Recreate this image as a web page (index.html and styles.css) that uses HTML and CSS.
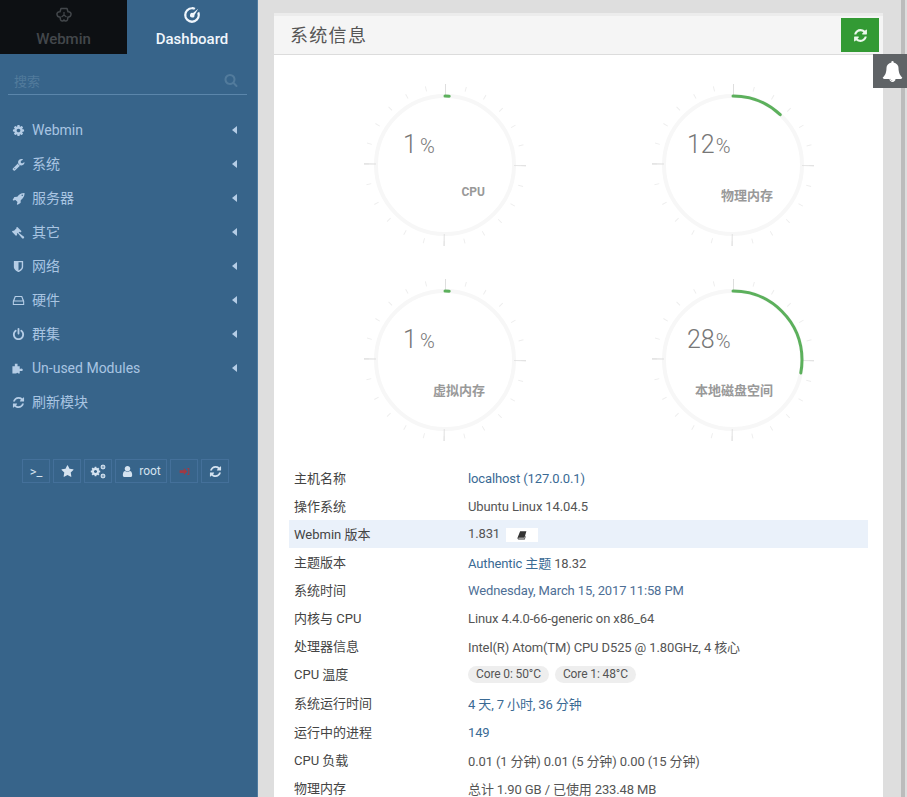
FILE: index.html
```html
<!DOCTYPE html>
<html lang="zh-CN">
<head>
  <meta charset="UTF-8" />
  <meta name="viewport" content="width=device-width, initial-scale=1.0"/>
  <title>Webmin Dashboard</title>
  <link rel="stylesheet" href="styles.css">
</head>
<body>
  <svg class="sprites" aria-hidden="true">
    <symbol id="i-refresh" viewBox="0 0 1792 1792"><path d="M1639 1056q0 5-1 7-64 268-268 434.5t-478 166.5q-146 0-282.5-55t-243.5-157l-129 129q-19 19-45 19t-45-19-19-45v-448q0-26 19-45t45-19h448q26 0 45 19t19 45-19 45l-137 137q71 66 161 102t187 36q134 0 250-65t186-179q11-17 53-117 8-23 30-23h192q13 0 22.5 9.5t9.5 22.5zm25-800v448q0 26-19 45t-45 19h-448q-26 0-45-19t-19-45 19-45l138-138q-148-137-349-137-134 0-250 65t-186 179q-11 17-53 117-8 23-30 23h-199q-13 0-22.5-9.5t-9.5-22.5v-7q65-268 270-434.5t480-166.5q146 0 284 55.5t245 156.5l130-129q19-19 45-19t45 19 19 45z"/></symbol>
    <symbol id="i-bell" viewBox="0 0 1792 1792"><path d="M912 1696q0-16-16-16-59 0-101.5-42.5t-42.5-101.5q0-16-16-16t-16 16q0 73 51.5 124.5t124.5 51.5q16 0 16-16zm816-288q0 52-38 90t-90 38h-448q0 106-75 181t-181 75-181-75-75-181h-448q-52 0-90-38t-38-90q50-42 91-88t85-119.5 74.5-158.5 50-206 19.5-260q0-152 117-282.5t307-158.5q-8-19-8-39 0-40 28-68t68-28 68 28 28 68q0 20-8 39 190 28 307 158.5t117 282.5q0 139 19.5 260t50 206 74.5 158.5 85 119.5 91 88z"/></symbol>
    <symbol id="i-star" viewBox="0 0 1792 1792"><path d="M1728 647q0 22-26 48l-363 354 86 500q1 7 1 20 0 21-10.5 35.5t-30.5 14.5q-19 0-40-12l-449-236-449 236q-22 12-40 12-21 0-31.5-14.5t-10.5-35.5q0-6 2-20l86-500-364-354q-25-27-25-48 0-37 56-46l502-73 225-455q19-41 49-41t49 41l225 455 502 73q56 9 56 46z"/></symbol>
    <symbol id="i-cog" viewBox="0 0 1792 1792"><path d="M1152 896q0-106-75-181t-181-75-181 75-75 181 75 181 181 75 181-75 75-181zm512-109v222q0 12-8 23t-20 13l-185 28q-19 54-39 91 35 50 107 138 10 12 10 25t-9 23q-27 37-99 108t-94 71q-12 0-26-9l-138-108q-44 23-91 38-16 136-29 186-7 28-36 28h-222q-14 0-24.5-8.5t-11.5-21.5l-28-184q-49-16-90-37l-141 107q-10 9-25 9-14 0-25-11-126-114-165-168-7-10-7-23 0-12 8-23 15-21 51-66.5t54-70.5q-27-50-41-99l-183-27q-13-2-21-12.5t-8-23.5v-222q0-12 8-23t19-13l186-28q14-46 39-92-40-57-107-138-10-12-10-24 0-10 9-23 26-36 98.5-107.5t94.5-71.5q13 0 26 10l138 107q44-23 91-38 16-136 29-186 7-28 36-28h222q14 0 24.5 8.5t11.5 21.5l28 184q49 16 90 37l142-107q9-9 24-9 13 0 25 10 129 119 165 170 7 8 7 22 0 12-8 23-15 21-51 66.5t-54 70.5q26 50 41 98l183 28q13 2 21 12.5t8 23.5z"/></symbol>
    <symbol id="i-wrench" viewBox="0 0 1792 1792"><path d="M448 1472q0-26-19-45t-45-19-45 19-19 45 19 45 45 19 45-19 19-45zm644-420l-682 682q-37 37-90 37-52 0-91-37l-106-108q-38-36-38-90 0-53 38-91l681-681q39 98 114.5 173.5t173.5 114.5zm634-435q0 39-23 106-47 134-164.5 217.5t-258.5 83.5q-185 0-316.5-131.5t-131.5-316.5 131.5-316.5 316.5-131.5q58 0 121.5 16.5t107.5 46.5q16 11 16 28t-16 28l-293 169v224l193 107q5-3 79-48.5t135.5-81 70.5-35.5q15 0 23.5 10t8.5 25z"/></symbol>
    <symbol id="i-rocket" viewBox="0 0 1792 1792"><path d="M1504 448q0-40-28-68t-68-28-68 28-28 68 28 68 68 28 68-28 28-68zm224-288q0 249-75.5 430.5t-253.5 360.5q-81 80-195 176l-20 379q-2 16-16 26l-384 224q-7 4-16 4-12 0-23-9l-64-64q-13-14-8-32l85-276-281-281-276 85q-3 1-9 1-14 0-23-9l-64-64q-17-19-5-39l224-384q10-14 26-16l379-20q96-114 176-195 188-187 358-258t431-71q14 0 24 9.5t10 22.5z"/></symbol>
    <symbol id="i-gavel" viewBox="0 0 16 16"><path d="M6.600 1.200 11.800 6.400 10.200 8 9.400 7.200 8.200 8.400 14.800 13.200 15 14.400 13.600 15.600 12.400 15 7 8.600 5.800 9.800 6.600 10.600 5 12.200-.2 7 1.400 5.400 2.200 6.200 5.800 2.600 5 1.800z"/></symbol>
    <symbol id="i-shield" viewBox="0 0 1792 1792"><path d="M1344 960v-640h-448v1137q119-63 213-137 235-184 235-360zm192-768v768q0 86-33.5 170.5t-83 150-118 127.5-126.5 103-121 77.5-89.5 49.5-42.5 20q-12 6-26 6t-26-6q-16-7-42.5-20t-89.5-49.5-121-77.5-126.5-103-118-127.5-83-150-33.5-170.5v-768q0-26 19-45t45-19h1152q26 0 45 19t19 45z"/></symbol>
    <symbol id="i-hdd" viewBox="0 0 16 16"><path d="M3.500 2.500h9L15 8.500v5H1v-5zM4.500 3.800 3 8h10l-1.500-4.200zM2.300 9.300v2.900h11.400V9.300z"/></symbol>
    <symbol id="i-power" viewBox="0 0 1792 1792"><path d="M1664 896q0 156-61 298t-164 245-245 164-298 61-298-61-245-164-164-245-61-298q0-182 80.500-343t226.500-270q43-32 95.500-25t83.500 50q32 42 24.500 94.500t-49.500 84.500q-98 74-151.500 181t-53.500 228q0 104 40.500 198.500t109.500 163.500 163.500 109.500 198.500 40.500 198.500-40.500 163.500-109.500 109.500-163.500 40.500-198.500q0-121-53.500-228t-151.500-181q-42-32-49.500-84.500t24.500-94.500q31-43 84-50t95 25q146 109 226.500 270t80.500 343zm-640-768v640q0 52-38 90t-90 38-90-38-38-90v-640q0-52 38-90t90-38 90 38 38 90z"/></symbol>
    <symbol id="i-puzzle" viewBox="0 0 16 16"><path d="M3.500 2h3.300v3.200h2.700v3h1.400a1.600 1.600 0 1 1 0 2.800H9.500v3H7.700a1.300 1.300 0 0 0-2.400 0H.5V5.200h3z"/></symbol>
    <symbol id="i-user" viewBox="0 0 1792 1792"><path d="M1536 1399q0 109-62.500 187t-150.500 78h-854q-88 0-150.500-78t-62.500-187q0-85 8.500-160.500t31.500-152 58.500-131 94-89 134.500-34.500q131 128 313 128t313-128q76 0 134.500 34.500t94 89 58.500 131 31.500 152 8.500 160.500zm-256-887q0 159-112.500 271.500t-271.500 112.500-271.500-112.500-112.500-271.500 112.500-271.500 271.500-112.500 271.500 112.500 112.500 271.500z"/></symbol>
    <symbol id="i-search" viewBox="0 0 1792 1792"><path d="M1216 832q0-185-131.500-316.500t-316.500-131.500-316.500 131.500-131.500 316.500 131.500 316.500 316.500 131.500 316.500-131.500 131.500-316.500zm512 832q0 52-38 90t-90 38q-54 0-90-38l-343-342q-179 124-399 124-143 0-273.500-55.500t-225-150-150-225-55.500-273.500 55.500-273.500 150-225 225-150 273.500-55.500 273.500 55.500 225 150 150 225 55.500 273.500q0 220-124 399l343 343q37 37 37 90z"/></symbol>
    <symbol id="i-gauge" viewBox="0 0 16 16"><path d="M8 1a7 7 0 1 0 7 7 7 7 0 0 0-.6-2.800l-1.700 1.100A5 5 0 1 1 10 3.400l1.100-1.700A7 7 0 0 0 8 1z"/><path d="M13.500 2.500 8.900 6.300a2 2 0 1 0 1.300 1.600z"/></symbol>
    <symbol id="i-webmin" viewBox="0 0 18 16"><path fill="none" stroke="currentColor" stroke-width="1.500" stroke-linejoin="round" d="M6 1.500h6l1 3.200c2-.3 3.400 1.300 3 3-.3 1.500-1.700 2.400-3 2.200l-.5 2.800c-.6 1.600-2.600 1.800-3.500.3-.9 1.500-2.900 1.300-3.500-.3L5 9.900C3.700 10.100 2.300 9.200 2 7.700 1.600 6 3 4.400 5 4.700z"/><path fill="none" stroke="currentColor" stroke-width="1.200" d="M9 5v3M9 8l-2.500 2M9 8l2.500 2"/></symbol>
    <symbol id="i-signout" viewBox="0 0 16 16"><path d="M1 6h6V3l5 5-5 5v-3H1z"/><path d="M12 3h3v10h-3v-1.500h1.500v-7H12z"/></symbol>
    <symbol id="i-book" viewBox="0 0 16 16"><path d="M5 2h10l-3 10.500H2.500L2 13.500 12 13.500 12.500 12.500 13.500 9 14 10 12.500 15H2.500C1 15 .5 13.500 1 12z"/></symbol>
  </svg>

  <aside class="sidebar">
    <div class="tabs">
      <a class="tab tab-off" href="#webmin">
        <svg class="tab-icon"><use href="#i-webmin"/></svg>
        <span>Webmin</span>
      </a>
      <a class="tab tab-on" href="#dashboard">
        <svg class="tab-icon"><use href="#i-gauge"/></svg>
        <span>Dashboard</span>
      </a>
    </div>

    <div class="search">
      <span>搜索</span>
      <svg class="search-icon"><use href="#i-search"/></svg>
    </div>

    <ul class="menu">
      <li><svg class="menu-icon"><use href="#i-cog"/></svg><span class="menu-text">Webmin</span><i class="caret"></i></li>
      <li><svg class="menu-icon"><use href="#i-wrench"/></svg><span class="menu-text menu-cn">系统</span><i class="caret"></i></li>
      <li><svg class="menu-icon"><use href="#i-rocket"/></svg><span class="menu-text menu-cn">服务器</span><i class="caret"></i></li>
      <li><svg class="menu-icon"><use href="#i-gavel"/></svg><span class="menu-text menu-cn">其它</span><i class="caret"></i></li>
      <li><svg class="menu-icon"><use href="#i-shield"/></svg><span class="menu-text menu-cn">网络</span><i class="caret"></i></li>
      <li><svg class="menu-icon"><use href="#i-hdd"/></svg><span class="menu-text menu-cn">硬件</span><i class="caret"></i></li>
      <li><svg class="menu-icon"><use href="#i-power"/></svg><span class="menu-text menu-cn">群集</span><i class="caret"></i></li>
      <li><svg class="menu-icon"><use href="#i-puzzle"/></svg><span class="menu-text">Un-used Modules</span><i class="caret"></i></li>
      <li><svg class="menu-icon"><use href="#i-refresh"/></svg><span class="menu-text menu-cn">刷新模块</span></li>
    </ul>

    <div class="tools">
      <span class="tool tool-term">&gt;_</span>
      <span class="tool"><svg class="tool-icon"><use href="#i-star"/></svg></span>
      <span class="tool tool-cogs">
        <svg class="cog-big"><use href="#i-cog"/></svg>
        <svg class="cog-small cog-top"><use href="#i-cog"/></svg>
        <svg class="cog-small cog-bottom"><use href="#i-cog"/></svg>
      </span>
      <span class="tool tool-user"><svg class="tool-icon"><use href="#i-user"/></svg>root</span>
      <span class="tool tool-exit"><svg class="exit-icon"><use href="#i-signout"/></svg></span>
      <span class="tool"><svg class="tool-icon"><use href="#i-refresh"/></svg></span>
    </div>
  </aside>

  <main class="content">
    <section class="panel">
      <header class="panel-head">
        <h1>系统信息</h1>
        <button class="reload" type="button"><svg class="reload-icon"><use href="#i-refresh"/></svg></button>
      </header>

      <div class="gauges">
        <div class="gauge">
          <svg class="dial" viewBox="0 0 170 170">
            <circle class="ring" cx="85" cy="85" r="69"/>
            <circle class="ticks" cx="85" cy="85" r="78.500"/>
            <circle class="ticks-big" cx="85" cy="85" r="75"/>
            <circle class="arc" cx="85" cy="85" r="69" pathLength="100" stroke-dasharray="1 99"/>
          </svg>
          <div class="pct pct-one">1<small>%</small></div>
          <div class="gauge-label gauge-label-en">CPU</div>
        </div>
        <div class="gauge">
          <svg class="dial" viewBox="0 0 170 170">
            <circle class="ring" cx="85" cy="85" r="69"/>
            <circle class="ticks" cx="85" cy="85" r="78.500"/>
            <circle class="ticks-big" cx="85" cy="85" r="75"/>
            <circle class="arc" cx="85" cy="85" r="69" pathLength="100" stroke-dasharray="12 88"/>
          </svg>
          <div class="pct">12<small>%</small></div>
          <div class="gauge-label">物理内存</div>
        </div>
        <div class="gauge">
          <svg class="dial" viewBox="0 0 170 170">
            <circle class="ring" cx="85" cy="85" r="69"/>
            <circle class="ticks" cx="85" cy="85" r="78.500"/>
            <circle class="ticks-big" cx="85" cy="85" r="75"/>
            <circle class="arc" cx="85" cy="85" r="69" pathLength="100" stroke-dasharray="1 99"/>
          </svg>
          <div class="pct pct-one">1<small>%</small></div>
          <div class="gauge-label">虚拟内存</div>
        </div>
        <div class="gauge">
          <svg class="dial" viewBox="0 0 170 170">
            <circle class="ring" cx="85" cy="85" r="69"/>
            <circle class="ticks" cx="85" cy="85" r="78.500"/>
            <circle class="ticks-big" cx="85" cy="85" r="75"/>
            <circle class="arc" cx="85" cy="85" r="69" pathLength="100" stroke-dasharray="28 72"/>
          </svg>
          <div class="pct">28<small>%</small></div>
          <div class="gauge-label">本地磁盘空间</div>
        </div>
      </div>

      <table class="info">
        <tr><td>主机名称</td><td><a href="#host">localhost (127.0.0.1)</a></td></tr>
        <tr><td>操作系统</td><td>Ubuntu Linux 14.04.5</td></tr>
        <tr class="hl"><td>Webmin 版本</td><td>1.831 <span class="book"><svg class="book-icon"><use href="#i-book"/></svg></span></td></tr>
        <tr><td>主题版本</td><td><a href="#theme">Authentic 主题</a> 18.32</td></tr>
        <tr><td>系统时间</td><td><a class="muted" href="#time">Wednesday, March 15, 2017 11:58 PM</a></td></tr>
        <tr><td>内核与 CPU</td><td>Linux 4.4.0-66-generic on x86_64</td></tr>
        <tr><td>处理器信息</td><td>Intel(R) Atom(TM) CPU D525 @ 1.80GHz, 4 核心</td></tr>
        <tr class="tall"><td>CPU 温度</td><td><span class="pill">Core 0: 50°C</span><span class="pill">Core 1: 48°C</span></td></tr>
        <tr class="tall"><td>系统运行时间</td><td><a href="#uptime">4 天, 7 小时, 36 分钟</a></td></tr>
        <tr><td>运行中的进程</td><td><a href="#proc">149</a></td></tr>
        <tr><td>CPU 负载</td><td>0.01 (1 分钟) 0.01 (5 分钟) 0.00 (15 分钟)</td></tr>
        <tr><td>物理内存</td><td>总计 1.90 GB / 已使用 233.48 MB</td></tr>
      </table>
    </section>

    <div class="bell"><svg class="bell-icon"><use href="#i-bell"/></svg></div>
  </main>
</body>
</html>
```

FILE: styles.css
```css
html, body {
  height: 797px;
  overflow: hidden;
}

body {
  display: flex;
  margin: 0;
  font-family: Roboto, "Noto Sans CJK SC", sans-serif;
  font-size: 13px;
  color: #555;
  background: #dedede;
}

a {
  text-decoration: none;
}

.sprites {
  display: none;
}

/* sidebar */
.sidebar {
  flex: 0 0 257px;
  background: #37648a;
  border-right: 1px solid #4f7ba0;
  color: #a9c5e2;
}

.tabs {
  display: flex;
  height: 54px;
}

.tab {
  display: flex;
  flex-direction: column;
  align-items: center;
  padding-top: 6px;
  font-size: 15px;
  box-sizing: border-box;
}

.tab-off {
  width: 127px;
  background: #0d1013;
  color: #43474b;
  font-weight: 500;
}

.tab-on {
  width: 130px;
  color: #f0f6fc;
  font-weight: 500;
}

.tab-icon {
  width: 18px;
  height: 18px;
  margin-bottom: 6px;
  fill: currentColor;
}

.search {
  display: flex;
  justify-content: space-between;
  align-items: flex-end;
  height: 36px;
  margin: 0 10px 0 8px;
  padding: 0 9px 4px 6px;
  border-bottom: 1px solid #5b86ab;
  color: #527b9c;
}

.search-icon {
  width: 14px;
  height: 14px;
  margin-bottom: 3px;
  fill: #527b9c;
}

.menu {
  list-style: none;
  margin: 18px 0 0;
  padding: 0;
}

.menu li {
  display: flex;
  align-items: center;
  height: 34px;
  padding-left: 12px;
  font-size: 14px;
}

.menu-icon {
  width: 13px;
  height: 13px;
  margin-right: 7px;
  fill: #b5cde6;
}

.menu-text {
  flex: 1;
}

.menu-cn {
  padding-bottom: 2px;
}

.caret {
  width: 0;
  height: 0;
  margin-right: 20px;
  border-top: 4px solid transparent;
  border-bottom: 4px solid transparent;
  border-right: 5px solid #b5cde6;
}

.tools {
  display: flex;
  gap: 3px;
  margin: 40px 0 0 22px;
}

.tool {
  display: flex;
  justify-content: center;
  align-items: center;
  gap: 5px;
  width: 26px;
  height: 22px;
  border: 1px solid #44709a;
  font-size: 12px;
  color: #d5e3f0;
}

.tool-term {
  font-size: 13px;
}

.tool-user {
  width: 50px;
}

.tool-exit {
  color: #a03a44;
}

.tool-icon {
  width: 13px;
  height: 13px;
  fill: currentColor;
}

.exit-icon {
  width: 11px;
  height: 11px;
  fill: currentColor;
}

.tool-cogs {
  position: relative;
}

.cog-big {
  width: 11px;
  height: 11px;
  margin: 1px 5px 0 0;
  fill: #d5e3f0;
}

.cog-small {
  position: absolute;
  right: 5px;
  width: 6px;
  height: 6px;
  fill: #d5e3f0;
}

.cog-top {
  top: 4px;
}

.cog-bottom {
  bottom: 3px;
}

/* main area */
.content {
  position: relative;
  flex: 1;
  padding: 16px 24px 0 16px;
}

.content::after {
  content: "";
  position: absolute;
  top: 0;
  right: 2px;
  bottom: 0;
  width: 4px;
  background: #bcbcbc;
}

.panel {
  background: #fff;
  box-shadow: 0 -3px 0 #ececec;
}

.panel-head {
  display: flex;
  justify-content: space-between;
  height: 39px;
  box-sizing: border-box;
  padding: 2px 4px 0 16px;
  background: #f5f5f5;
  border-bottom: 1px solid #dcdcdc;
}

.panel-head h1 {
  margin: 0;
  font-size: 18px;
  font-weight: 400;
  line-height: 35px;
  letter-spacing: 1.300px;
  color: #555;
}

.reload {
  width: 38px;
  height: 34px;
  padding: 0;
  border: 0;
  background: #339a34;
}

.reload-icon {
  display: block;
  width: 15px;
  height: 15px;
  margin: auto;
  fill: #eaf7ea;
}

.gauges {
  display: grid;
  grid-template-columns: 288px 288px;
  grid-template-rows: 195px 189px;
  padding: 25px 0 0 27px;
}

.gauge {
  position: relative;
  width: 170px;
  height: 170px;
  justify-self: center;
}

.dial {
  display: block;
  width: 170px;
  height: 170px;
  transform: rotate(-90deg);
  fill: none;
}

.ring {
  stroke: #f7f7f7;
  stroke-width: 4;
}

.ticks {
  stroke: #eeeeee;
  stroke-width: 5;
  stroke-dasharray: 1 19.55;
}

.ticks-big {
  stroke: #dedede;
  stroke-width: 12;
  stroke-dasharray: 1 116.81;
}

.arc {
  stroke: #5cb05c;
  stroke-width: 3;
  stroke-linecap: round;
}

.pct {
  position: absolute;
  left: 39px;
  top: 50px;
  font-size: 25px;
  font-weight: 300;
  line-height: 30px;
  color: #777;
}

.pct-one {
  left: 43px;
}

.pct small {
  margin-left: 1px;
  font-size: 20px;
}

.pct-one small {
  margin-left: 3px;
}

.gauge-label {
  position: absolute;
  right: 45px;
  top: 105px;
  font-size: 13px;
  font-weight: 700;
  color: #999;
}

.gauge-label-en {
  font-size: 12px;
}

/* info table */
.info {
  width: 579px;
  margin: 0 0 0 15px;
  border-collapse: collapse;
}

.info td {
  height: 28px;
  padding: 0 5px;
  letter-spacing: -0.12px;
}

.info td:first-child {
  width: 174px;
  padding-bottom: 2px;
  box-sizing: border-box;
  color: #444;
  letter-spacing: 0;
}

.info a {
  color: #3a6a94;
}

.info a.muted {
  color: #4e6f96;
}

.hl {
  background: #eaf1fa;
}

.info .tall td {
  height: 29px;
}

.book {
  display: inline-flex;
  justify-content: center;
  align-items: center;
  width: 32px;
  height: 14px;
  margin-left: 3px;
  background: #fff;
  vertical-align: middle;
}

.book-icon {
  width: 10px;
  height: 10px;
  fill: #333;
}

.pill {
  display: inline-block;
  margin-right: 6px;
  padding: 0 8px;
  line-height: 17px;
  font-size: 12px;
  border-radius: 9px;
  background: #eee;
  color: #555;
}

.bell {
  position: absolute;
  z-index: 1;
  top: 54px;
  right: 0;
  display: flex;
  justify-content: center;
  align-items: center;
  width: 34px;
  height: 34px;
  padding-left: 5px;
  box-sizing: border-box;
  background: #5f6366;
}

.bell-icon {
  width: 21px;
  height: 21px;
  fill: #fff;
}
```
